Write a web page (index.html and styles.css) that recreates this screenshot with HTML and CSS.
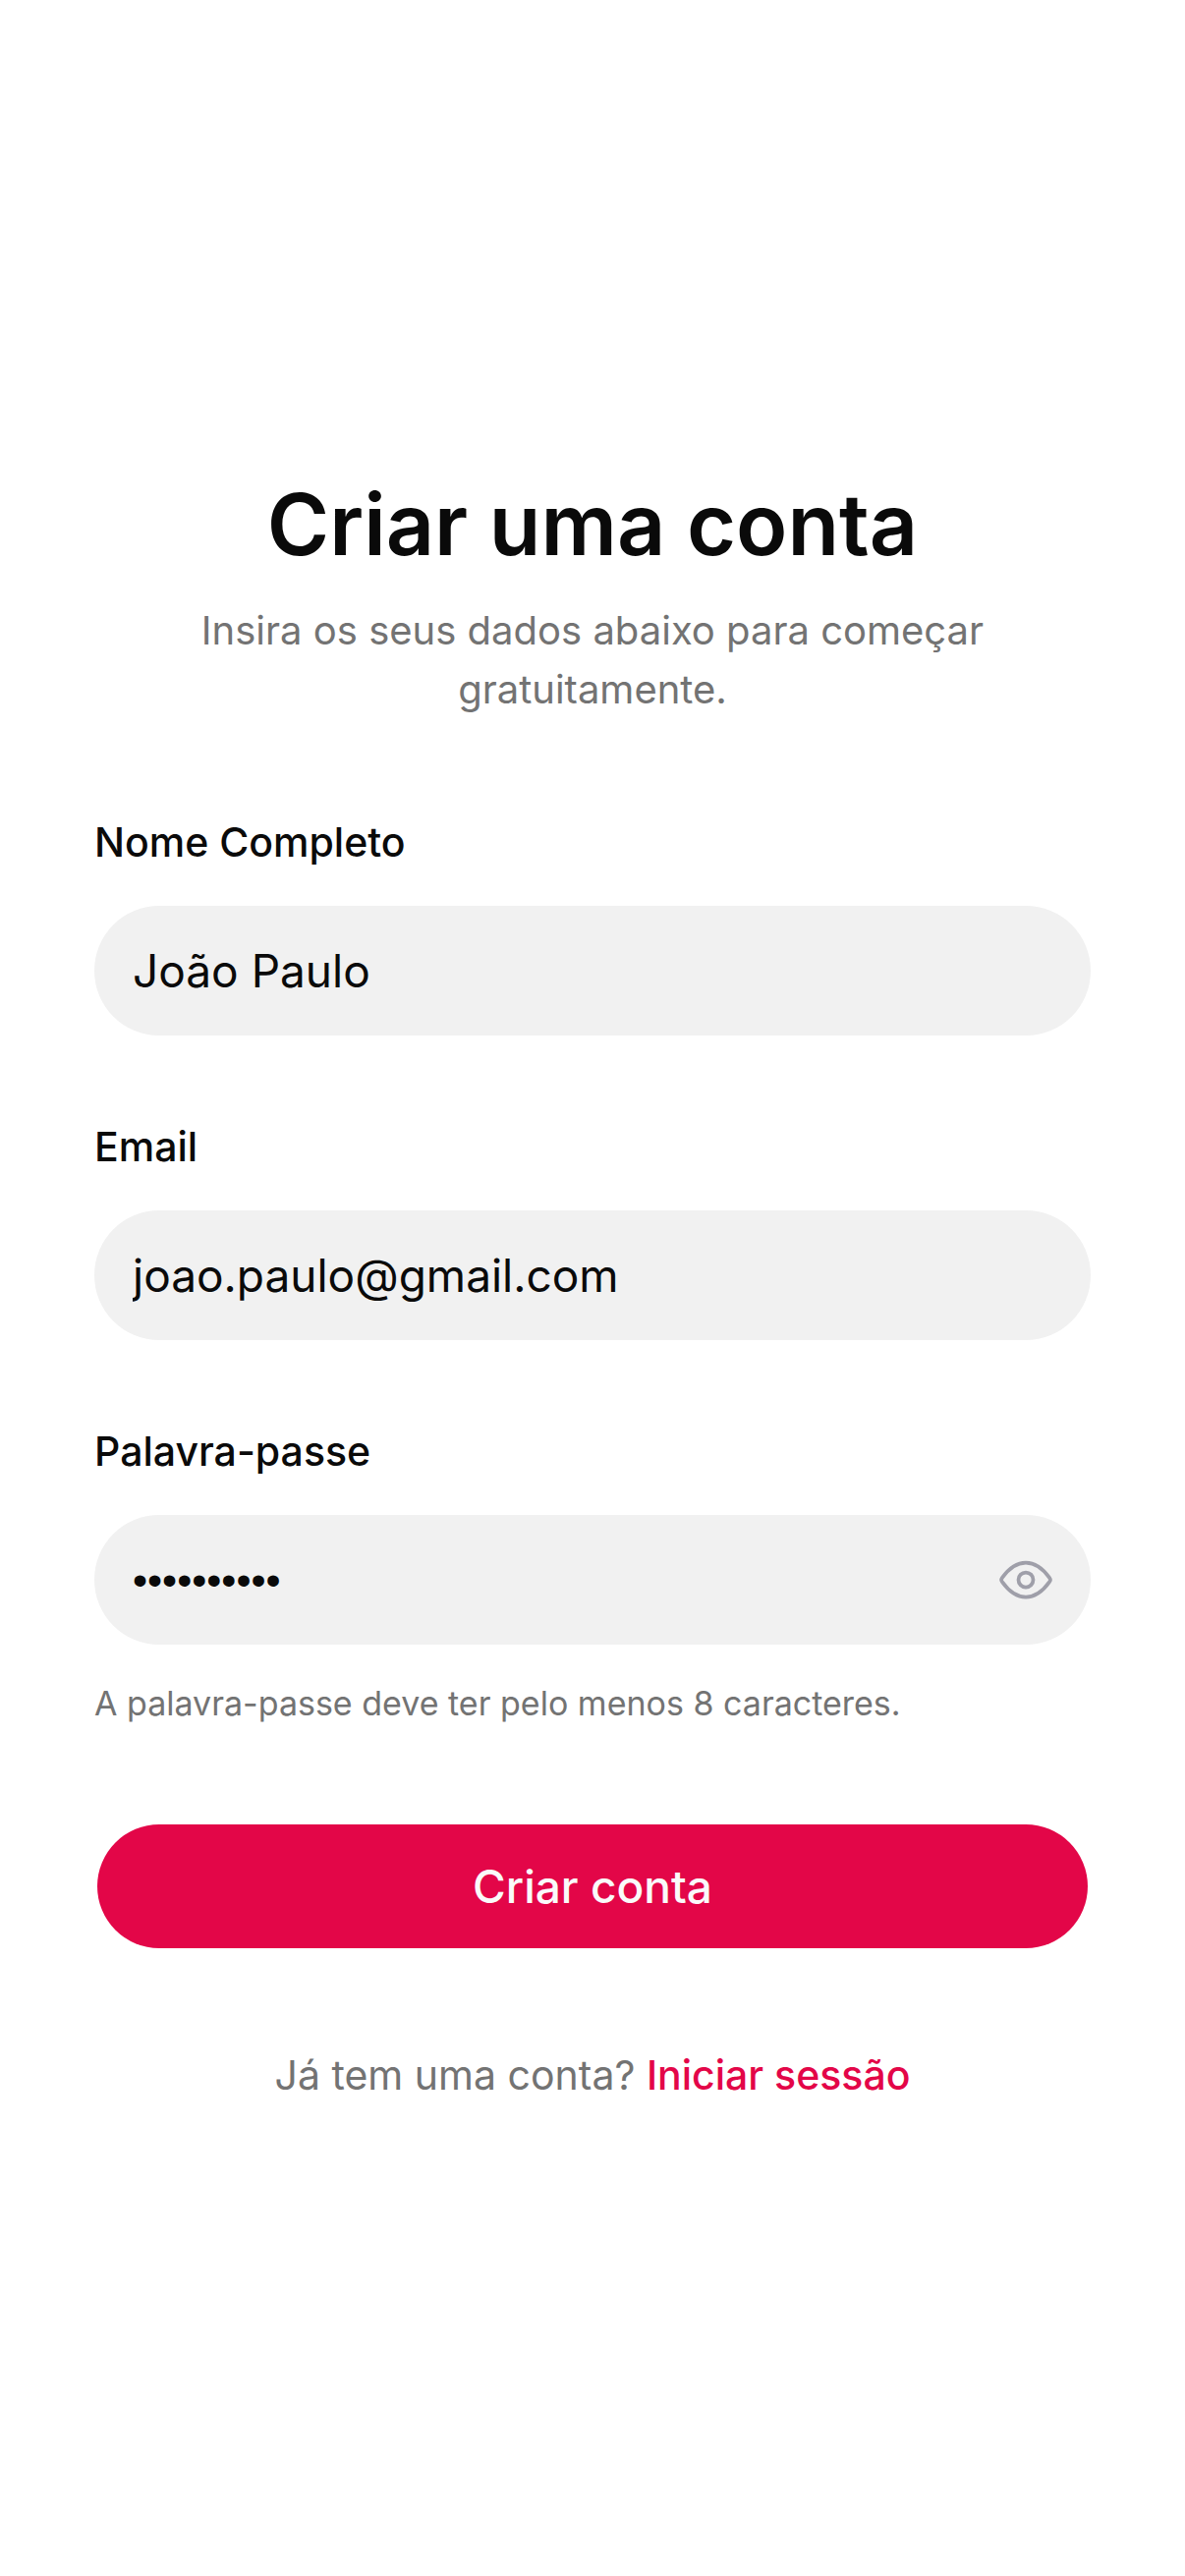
FILE: index.html
```html
<!DOCTYPE html>
<html lang="pt">
<head>
  <meta charset="UTF-8">
  <title>Criar uma conta</title>
  <meta name="viewport" content="width=device-width, initial-scale=1.0">
  <link rel="stylesheet" href="styles.css">
</head>
<body>
  <main class="signup">
    <header class="signup-header">
      <h1>Criar uma conta</h1>
      <p>Insira os seus dados abaixo para começar gratuitamente.</p>
    </header>

    <form class="signup-form">
      <div class="field">
        <label for="name">Nome Completo</label>
        <input id="name" type="text" value="João Paulo">
      </div>

      <div class="field">
        <label for="email">Email</label>
        <input id="email" type="email" value="joao.paulo@gmail.com">
      </div>

      <div class="field">
        <label for="password">Palavra-passe</label>
        <div class="password-box">
          <input id="password" type="password" value="joao123456" aria-describedby="password-help">
          <button type="button" class="toggle" aria-label="Mostrar palavra-passe">
            <svg viewBox="0 0 24 24" fill="none" stroke="currentColor" stroke-width="1.5">
              <path d="M21.544 11.045C21.848 11.4713 22 11.6845 22 12C22 12.3155 21.848 12.5287 21.544 12.955C20.1779 14.8706 16.6892 19 12 19C7.31078 19 3.8221 14.8706 2.45604 12.955C2.15201 12.5287 2 12.3155 2 12C2 11.6845 2.15201 11.4713 2.45604 11.045C3.8221 9.12944 7.31078 5 12 5C16.6892 5 20.1779 9.12944 21.544 11.045Z"/>
              <circle cx="12" cy="12" r="3"/>
            </svg>
          </button>
        </div>
        <p id="password-help" class="help">A palavra-passe deve ter pelo menos 8 caracteres.</p>
      </div>

      <button type="submit" class="submit">Criar conta</button>
    </form>

    <p class="signin">Já tem uma conta? <a href="#">Iniciar sessão</a></p>
  </main>
</body>
</html>
```
FILE: styles.css
```css
* { box-sizing: border-box; }
body {
  font-family: Inter, "Liberation Sans", sans-serif;
  background: #fff;
  margin: 0;
  color: #0a0a0a;
  font-size: 41px;
  line-height: 60px;
}
h1, p { margin: 0; }
input, button { font: inherit; color: inherit; }

.signup {
  min-height: 100vh;
  padding: 96px;
  display: flex;
  flex-direction: column;
  justify-content: center;
  gap: 96px;
}
.signup-header {
  display: flex;
  flex-direction: column;
  gap: 24px;
  text-align: center;
  font-size: 40px;
  color: #737373;
}
h1 {
  font-size: 86px;
  line-height: 108px;
  font-weight: 600;
  color: #0a0a0a;
}

/* Form */
.signup-form {
  display: flex;
  flex-direction: column;
  gap: 84px;
}
.field {
  display: flex;
  flex-direction: column;
  gap: 36px;
}
.field label {
  line-height: 58px;
  font-weight: 500;
}
.field input {
  width: 100%;
  height: 132px;
  padding: 0 39px;
  border: none;
  border-radius: 66px;
  background: #f1f1f1;
  font-size: 46px;
}
.password-box { position: relative; }
.password-box input {
  padding-right: 120px;
  font-family: "Liberation Sans", sans-serif;
}
.password-box input[type="password"] { font-size: 43px; }
.toggle {
  position: absolute;
  top: 0;
  right: 36px;
  height: 100%;
  padding: 0;
  border: none;
  background: none;
  color: #9f9fa9;
  cursor: pointer;
}
.toggle svg {
  display: block;
  width: 60px;
  height: 60px;
}
.help {
  font-size: 34px;
  line-height: 48px;
  color: #737373;
}
.submit {
  height: 132px;
  margin-top: 12px;
  border: 3px solid transparent;
  border-radius: 66px;
  background: #e30648;
  background-clip: padding-box;
  color: #fafafa;
  font-size: 46px;
  font-weight: 500;
  cursor: pointer;
}
.signin {
  text-align: center;
  color: #737373;
}
.signin a {
  color: #e30648;
  font-weight: 500;
  text-decoration: none;
}
```
